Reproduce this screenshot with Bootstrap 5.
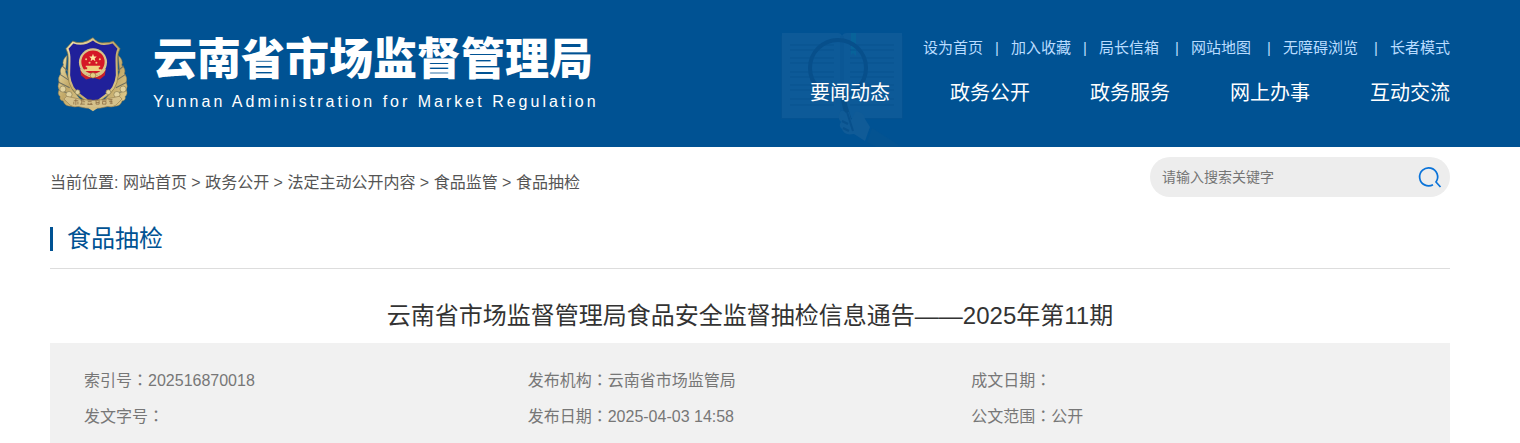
<!DOCTYPE html>
<html lang="zh-CN">
<head>
<meta charset="utf-8">
<meta name="viewport" content="width=device-width, initial-scale=1">
<title>食品抽检 - 云南省市场监督管理局</title>
<link href="https://cdn.jsdelivr.net/npm/bootstrap@5.3.0/dist/css/bootstrap.min.css" rel="stylesheet">
<style>
  body { font-family: "Liberation Sans", "Noto Sans CJK SC", sans-serif; font-size: 16px; color: #333; }
  a { text-decoration: none; color: inherit; }
  .page-wrap { padding-left: 50px; padding-right: 70px; }
  .site-header { background: #005293; color: #fff; height: 147px; }
  .emblem { width: 74px; height: 76px; margin: 36px 22px 0 7px; flex: none; }
  .site-name { font-size: 44px; line-height: 48px; font-weight: 900; margin: 36px 0 0; }
  .site-sub { font-size: 16px; line-height: 20px; letter-spacing: 3px; margin: 8px 0 0; }
  .header-art { position: absolute; right: 0; top: 0; width: 740px; height: 147px; }
  .top-links { font-size: 15px; line-height: 20px; color: #b9dcff; margin-top: 38px; }
  .top-links li + li::before { content: "|"; display: inline-block; width: 4px; margin: 0 12px; }
  .top-links .wide-gap::before { margin-left: 16px !important; }
  .main-nav { font-size: 20px; line-height: 30px; gap: 60px; margin-top: 20px; }
  .crumbs { color: #555; line-height: 24px; margin-top: 24px; }
  .search-box { width: 300px; height: 40px; background: #ededed; border-radius: 20px; margin-top: 10px; padding: 0 10px 0 12px; }
  .search-box input { font-size: 14px; color: #555; min-width: 0; }
  .search-box input::placeholder { color: #757575; }
  .section-head { border-bottom: 1px solid #ddd; margin-top: 15px; padding: 15px 0 17px; }
  .section-head h2 { font-size: 24px; line-height: 24px; color: #005293; border-left: 3px solid #005293; padding-left: 14px; margin: 0; font-weight: 400; }
  .article-title { font-size: 24px; line-height: 36px; font-weight: 400; color: #333; margin: 29px 0 9px; }
  .meta-box { background: #f1f1f1; color: #777; padding: 20px 35px 8px 34px; line-height: 36px; }
  .meta-box dt, .meta-box dd { display: inline; font-weight: 400; margin: 0; }
  .meta-box [lang] { font-family: "Noto Sans CJK TC", sans-serif; line-height: 1; }
</style>
</head>
<body>
<header class="site-header position-relative">
  <svg class="header-art" viewBox="780 0 740 147" aria-hidden="true">
    <path d="M781 36h122v83H781z" fill="#07528f" opacity=".5"/>
    <path d="M782 33h56q3 0 4 3 1-3 5-3h55v85H782z" fill="#0d5a98"/>
    <path d="M841 36v82M843 36v82" stroke="#09538f" opacity=".5"/>
    <path d="M851 33h5v23l-3-3-2 2z" fill="#08639a"/>
    <path d="M790 45h44m16 0h44M790 50h44m16 0h44M790 58h44m16 0h44M790 63h44m16 0h44M790 72h44m16 0h44M790 77h44m16 0h44M790 85h44m16 0h44M790 90h44m16 0h44M790 99h44m16 0h44M790 105h44m16 0h44" stroke="#07508d" opacity=".7"/>
    <circle cx="838" cy="68" r="28" fill="none" stroke="#074f8b" stroke-width="4"/>
    <path d="m843 98 3 12 6 18" fill="none" stroke="#084f89" stroke-width="5"/>
    <path d="M840 112q3-3 6 1l3-1 2 8 5-9q8 1 9 8l5 8-5 14-11-7q-10 2-12-5-4-3-1-7-4-3-1-10z" fill="#105b97"/>
    <path d="m847 112 6 19m-10-3 6 3m-7-10 6 3" stroke="#08508c" stroke-width="2"/>
    <path d="m867 142 5-14 30 19h-26z" fill="#045391"/>
  </svg>
  <div class="page-wrap d-flex justify-content-between position-relative">
    <a href="#" class="d-flex align-items-start">
      <svg class="emblem" viewBox="26 20 216 222" role="img" aria-label="徽标">
        <defs><linearGradient id="gold" x1="0" y1="0" x2="1" y2="1"><stop offset="0" stop-color="#f4e8b2"/><stop offset=".5" stop-color="#c2a868"/><stop offset="1" stop-color="#e3d194"/></linearGradient></defs>
        <g fill="url(#gold)" stroke="#8a7648" stroke-width="1.5">
          <path d="M55 77q-16 14-10 28-13 12-8 25-10 12-5 25-6 12 0 22-6 13 3 20-3 11 9 13 4 17 28 15l35-4-36-44-20-52z"/>
          <path d="M205 77q16 14 10 28 13 12 8 25 10 12 5 25 6 12 0 22 6 13-3 20 3 11-9 13-4 17-28 15l-35-4 36-44 20-52z"/>
        </g>
        <path d="M41 107l17 16M35 132l24 16M31 155l32 16M33 179l34 10M221 107l-19 16M226 132l-24 16M230 155l-32 16M228 179l-34 10" stroke="#6f7060" stroke-width="3"/>
        <g transform="translate(6 3) scale(.94 1)">
          <path d="M133 22q15 17 35 15 18 0 28-5l21 22q-9 13-7 37l1 43q-4 42-39 61l-39 27-39-27q-35-19-39-61l1-43q2-24-7-37l21-22q28 13 63-10z" fill="url(#gold)" stroke="#947c43" stroke-width="2"/>
          <path d="M133 30q17 14 36 13 14 0 25-4l15 15q-7 13-6 36l1 42q-4 39-36 57l-35 25-35-25q-32-18-36-57l1-42q1-23-6-36l15-15q33 10 61-9z" fill="#20209a"/>
        </g>
        <circle cx="131" cy="97" r="41" fill="#d8c58a"/>
        <circle cx="131" cy="96" r="34" fill="#d51827"/>
        <path d="m131 72 3 8h8l-6 6 2 8-7-5-7 5 2-8-6-6h8z" fill="#ffe8a0"/>
        <g fill="#f1d080"><circle cx="111" cy="88" r="3"/><circle cx="151" cy="88" r="3"/><circle cx="121" cy="98" r="3"/><circle cx="141" cy="98" r="3"/><path d="M110 107h42v4h-4v6h8v5h-50v-5h8v-6h-4z"/></g>
        <path d="M94 115q12 24 37 24t37-24l-2 20-15 12-20-6-20 6-15-12z" fill="#c8202d"/>
        <path d="M95 117q12 22 36 22t36-22" fill="none" stroke="#e2cb86" stroke-width="4"/>
        <circle cx="131" cy="135" r="8" fill="#e6cd83" stroke="#9a6b35" stroke-width="2"/>
        <g fill="#e1d29f" stroke="#8c8055" stroke-width="2"><circle cx="43" cy="175" r="9"/><circle cx="61" cy="191" r="9"/><circle cx="86" cy="184" r="7"/><circle cx="219" cy="175" r="9"/><circle cx="201" cy="191" r="9"/><circle cx="176" cy="184" r="7"/></g>
        <path d="M72 200q59 16 118 0l18-4 8 8-18 18q-11 8-24 4-43 12-86 0-13 4-24-4l-18-18 8-8z" fill="#d5c18b" stroke="#957f50" stroke-width="2"/>
        <path d="M75 209h13m-7-5v18m-6-10v8m12-8v8M94 207h11m-7-3v15m-5 0h14m-7-7h8M114 206h13m-11 5h11m-12 9h15m-13-5v5m6-5v5m4-5v5M137 207h14m-11 3v9h9v-9m-9 4h9M158 207h13m-12 4h10v8h-10zM176 206h12m-10 5h10m-8 5h9m-5-11v14" fill="none" stroke="#82623b" stroke-width="2"/>
        <path d="M118 231l13-4 13 4-13 9z" fill="#d5bf81"/>
      </svg>
      <div>
        <h1 class="site-name">云南省市场监督管理局</h1>
        <p class="site-sub">Yunnan Administration for Market Regulation</p>
      </div>
    </a>
    <div class="d-flex flex-column align-items-end text-nowrap">
      <ul class="top-links list-unstyled d-flex mb-0">
        <li><a href="#">设为首页</a></li>
        <li><a href="#">加入收藏</a></li>
        <li><a href="#">局长信箱</a></li>
        <li class="wide-gap"><a href="#">网站地图</a></li>
        <li class="wide-gap"><a href="#">无障碍浏览</a></li>
        <li class="wide-gap"><a href="#">长者模式</a></li>
      </ul>
      <nav class="main-nav d-flex" aria-label="主导航">
        <a href="#">要闻动态</a>
        <a href="#">政务公开</a>
        <a href="#">政务服务</a>
        <a href="#">网上办事</a>
        <a href="#">互动交流</a>
      </nav>
    </div>
  </div>
</header>
<main class="page-wrap">
  <div class="d-flex justify-content-between align-items-start">
    <nav class="crumbs" aria-label="当前位置">当前位置: <a href="#">网站首页</a> &gt; <a href="#">政务公开</a> &gt; <a href="#">法定主动公开内容</a> &gt; <a href="#">食品监管</a> &gt; <a href="#">食品抽检</a></nav>
    <form class="search-box d-flex align-items-center">
      <input type="text" class="flex-grow-1 border-0 bg-transparent p-0" placeholder="请输入搜索关键字" aria-label="请输入搜索关键字">
      <button type="button" class="btn border-0 p-0 d-flex" aria-label="搜索">
        <svg width="20" height="20" viewBox="0 0 20 20" overflow="visible" fill="none" stroke="#0a73d9" stroke-width="1.7"><path d="M13 17.700A9 9 0 1 1 16 15l4.500 5"/></svg>
      </button>
    </form>
  </div>
  <div class="section-head"><h2>食品抽检</h2></div>
  <h1 class="article-title text-center">云南省市场监督管理局食品安全监督抽检信息通告——2025年第11期</h1>
  <div class="meta-box">
    <dl class="row gx-0 mb-0">
      <div class="col-4"><dt>索引号<span lang="zh-TW">：</span></dt><dd>202516870018</dd></div>
      <div class="col-4"><dt>发布机构<span lang="zh-TW">：</span></dt><dd>云南省市场监管局</dd></div>
      <div class="col-4"><dt>成文日期<span lang="zh-TW">：</span></dt><dd></dd></div>
      <div class="col-4"><dt>发文字号<span lang="zh-TW">：</span></dt><dd></dd></div>
      <div class="col-4"><dt>发布日期<span lang="zh-TW">：</span></dt><dd>2025-04-03 14:58</dd></div>
      <div class="col-4"><dt>公文范围<span lang="zh-TW">：</span></dt><dd>公开</dd></div>
    </dl>
  </div>
</main>
<script src="https://cdn.jsdelivr.net/npm/bootstrap@5.3.0/dist/js/bootstrap.bundle.min.js"></script>
</body>
</html>
